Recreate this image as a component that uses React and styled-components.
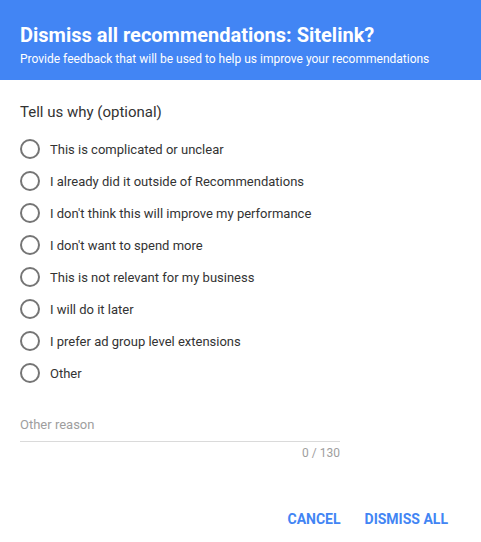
import React from 'react';
import styled, { createGlobalStyle } from 'styled-components';

const GlobalStyle = createGlobalStyle`
  body {
    margin: 0;
    background: #fff;
    font-family: Roboto, "Liberation Sans", Arial, sans-serif;
  }
`;

const Dialog = styled.div`
  width: 481px;
  height: 542px;
  display: flex;
  flex-direction: column;
  background: #fff;
`;

const Header = styled.div`
  background: #4285f4;
  color: #fff;
  height: 80px;
  box-sizing: border-box;
  padding: 22px 20px 0;
`;

const Title = styled.h1`
  margin: 0 0 3px;
  font-size: 20px;
  font-weight: 700;
  line-height: 26px;
`;

const Subtitle = styled.p`
  margin: 0;
  font-size: 12px;
  line-height: 16px;
`;

const Body = styled.div`
  padding: 22px 20px 0;
  display: flex;
  flex-direction: column;
`;

const Question = styled.div`
  font-size: 15px;
  color: #333;
  line-height: 20px;
  margin-bottom: 17px;
`;

const Options = styled.div`
  display: flex;
  flex-direction: column;
  gap: 12px;
`;

const Option = styled.label`
  display: flex;
  align-items: center;
  gap: 10px;
  height: 20px;
  font-size: 13px;
  color: #333;
  cursor: pointer;
`;

const Radio = styled.span`
  width: 16px;
  height: 16px;
  border: 2px solid #757575;
  border-radius: 50%;
  flex-shrink: 0;
`;

const Field = styled.div`
  width: 320px;
  margin-top: 34px;
  display: flex;
  flex-direction: column;
`;

const Input = styled.input`
  border: none;
  border-bottom: 1px solid #dadada;
  outline: none;
  padding: 0 0 9px;
  font-family: inherit;
  font-size: 13px;
  color: #333;
  &::placeholder {
    color: #9e9e9e;
  }
`;

const Counter = styled.div`
  align-self: flex-end;
  margin-top: 4px;
  font-size: 12px;
  color: #9e9e9e;
`;

const Actions = styled.div`
  margin-top: auto;
  display: flex;
  justify-content: flex-end;
  gap: 24px;
  padding: 0 33px 13px 0;
`;

const ActionButton = styled.button`
  background: transparent;
  border: none;
  padding: 0;
  font-family: inherit;
  font-size: 14px;
  font-weight: 700;
  color: #4285f4;
  text-transform: uppercase;
  line-height: 20px;
  cursor: pointer;
`;

const reasons = [
  'This is complicated or unclear',
  'I already did it outside of Recommendations',
  "I don't think this will improve my performance",
  "I don't want to spend more",
  'This is not relevant for my business',
  'I will do it later',
  'I prefer ad group level extensions',
  'Other',
];

const App = () => {
  return (
    <Dialog>
      <GlobalStyle />
      <Header>
        <Title>Dismiss all recommendations: Sitelink?</Title>
        <Subtitle>
          Provide feedback that will be used to help us improve your recommendations
        </Subtitle>
      </Header>
      <Body>
        <Question>Tell us why (optional)</Question>
        <Options>
          {reasons.map((r) => (
            <Option key={r}>
              <Radio />
              {r}
            </Option>
          ))}
        </Options>
        <Field>
          <Input placeholder="Other reason" />
          <Counter>0 / 130</Counter>
        </Field>
      </Body>
      <Actions>
        <ActionButton>Cancel</ActionButton>
        <ActionButton>Dismiss all</ActionButton>
      </Actions>
    </Dialog>
  );
};

export default App;
